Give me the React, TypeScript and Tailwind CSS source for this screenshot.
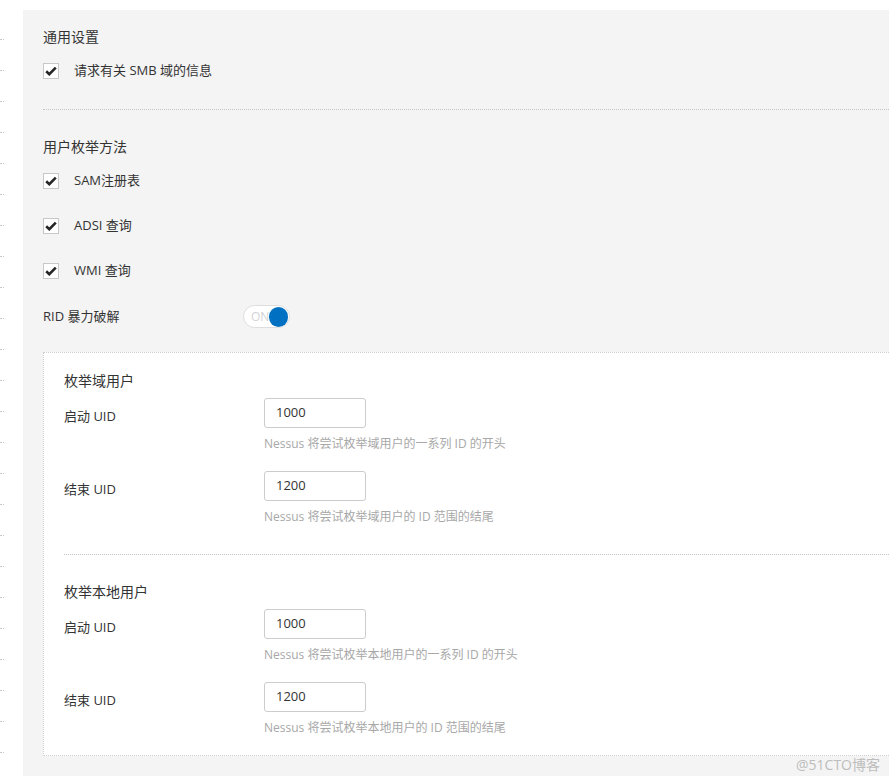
import React from "react";

const font = { fontFamily: '"Open Sans", "Noto Sans CJK SC", sans-serif' };

function Check() {
  return (
    <div className="w-4 h-4 border border-[#c8c8c8] bg-white flex items-center justify-center shrink-0">
      <svg width="12" height="10" viewBox="0 0 12 10">
        <path d="M1.2 5.2 L4.3 8.2 L10.8 1.6" fill="none" stroke="#262626" strokeWidth="2.6" />
      </svg>
    </div>
  );
}

function CheckRow({ label }: { label: string }) {
  return (
    <div className="flex items-center h-6">
      <Check />
      <span className="ml-[15px] text-[13px] text-[#333]">{label}</span>
    </div>
  );
}

function Toggle() {
  return (
    <div className="w-[47px] h-[23px] rounded-full border border-[#dedede] bg-white flex items-center justify-between pl-[7px] pr-px">
      <span className="text-[12px] text-[#d4d4d4] leading-none">ON</span>
      <div className="w-[20px] h-[20px] rounded-full bg-[#0071c2]" />
    </div>
  );
}

function Field({ label, value, help }: { label: string; value: string; help: string }) {
  return (
    <div className="flex items-start">
      <div className="w-[200px] pt-[8px] h-5 box-content text-[13px] text-[#333] leading-5">{label}</div>
      <div className="flex flex-col">
        <div className="w-[102px] h-[30px] border border-[#cccccc] rounded-[3px] bg-white flex items-center pl-[11px] text-[13px] text-[#333]">
          {value}
        </div>
        <div className="mt-[6px] h-5 leading-5 text-[12px] text-[#a8a8a8] whitespace-nowrap">{help}</div>
      </div>
    </div>
  );
}

function Group({ title, rows }: { title: string; rows: { label: string; value: string; help: string }[] }) {
  return (
    <div className="flex flex-col">
      <div className="h-5 leading-5 text-[14px] text-[#333]">{title}</div>
      <div className="mt-[7px]">
        <Field {...rows[0]} />
      </div>
      <div className="mt-[17px]">
        <Field {...rows[1]} />
      </div>
    </div>
  );
}

export default function App() {
  const marks = Array.from({ length: 24 });
  return (
    <div className="relative w-[889px] h-[784px] overflow-hidden bg-white flex" style={font}>
      {/* left edge remnants */}
      <div className="w-[23px] shrink-0 flex flex-col pt-[39px]">
        {marks.map((_, i) => (
          <div key={i} className="h-[31px]">
            <div className="w-[4px] h-px border-t border-dotted border-[#c8c8c8]" />
          </div>
        ))}
      </div>

      <div className="flex-1 pt-[10px] pb-[8px] flex flex-col">
        <div className="flex-1 bg-[#f4f4f4] pl-5 pt-[17px] pb-5 flex flex-col">
          <div className="h-5 leading-5 text-[14px] text-[#333]">通用设置</div>
          <div className="mt-3">
            <CheckRow label="请求有关 SMB 域的信息" />
          </div>
          <div className="mt-[26px] border-t border-dotted border-[#c4c4c4]" />

          <div className="mt-[27px] h-5 leading-5 text-[14px] text-[#333]">用户枚举方法</div>
          <div className="mt-3 flex flex-col gap-[21px]">
            <CheckRow label="SAM注册表" />
            <CheckRow label="ADSI 查询" />
            <CheckRow label="WMI 查询" />
          </div>
          <div className="mt-[22px] flex items-center h-[23px]">
            <span className="w-[200px] text-[13px] text-[#333]">RID 暴力破解</span>
            <Toggle />
          </div>

          <div className="mt-[24px] bg-white border border-r-0 border-dotted border-[#cfcfcf] pl-5 pt-[18px] pb-[17px] flex flex-col">
            <Group
              title="枚举域用户"
              rows={[
                { label: "启动 UID", value: "1000", help: "Nessus 将尝试枚举域用户的一系列 ID 的开头" },
                { label: "结束 UID", value: "1200", help: "Nessus 将尝试枚举域用户的 ID 范围的结尾" },
              ]}
            />
            <div className="mt-[27px] border-t border-dotted border-[#c4c4c4]" />
            <div className="mt-[27px]">
              <Group
                title="枚举本地用户"
                rows={[
                  { label: "启动 UID", value: "1000", help: "Nessus 将尝试枚举本地用户的一系列 ID 的开头" },
                  { label: "结束 UID", value: "1200", help: "Nessus 将尝试枚举本地用户的 ID 范围的结尾" },
                ]}
              />
            </div>
          </div>
        </div>
      </div>

      {/* watermark */}
      <div className="absolute right-[9px] bottom-[9px] text-[14px] text-[#bdbdbd] leading-5">@51CTO博客</div>
    </div>
  );
}
